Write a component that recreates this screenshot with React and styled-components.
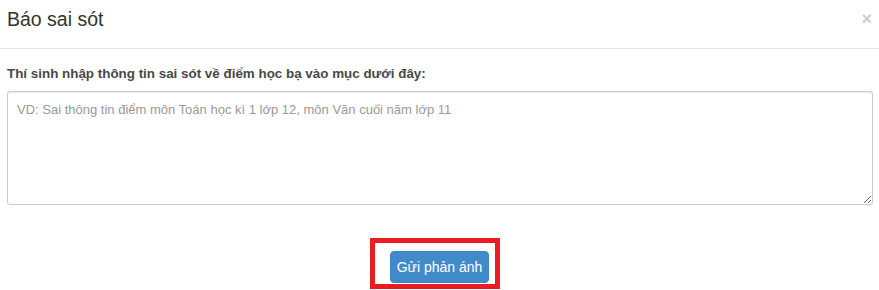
import React from 'react'
import styled, { createGlobalStyle } from 'styled-components'

const Global = createGlobalStyle`
  html, body {
    margin: 0;
    padding: 0;
    background: #fff;
  }
  body {
    font-family: "Liberation Sans", Arial, Helvetica, sans-serif;
    color: #333;
  }
  * { box-sizing: border-box; }
`

const Modal = styled.div`
  width: 879px;
  height: 290px;
  display: flex;
  flex-direction: column;
  background: #fff;
`

const Header = styled.div`
  height: 49px;
  padding: 8px 7px 0 7px;
  display: flex;
  justify-content: space-between;
  align-items: flex-start;
  border-bottom: 1px solid #e5e5e5;
`

const Title = styled.h4`
  margin: 0;
  font-size: 19.5px;
  line-height: 22px;
  font-weight: 400;
  color: #333;
`

const Close = styled.button`
  border: none;
  background: transparent;
  padding: 0;
  margin-top: 1px;
  font-family: "Liberation Sans", Arial, sans-serif;
  font-size: 18px;
  line-height: 20px;
  font-weight: 700;
  color: #000;
  opacity: 0.2;
  cursor: pointer;
`

const Body = styled.div`
  padding: 16px 6px 0 7px;
  display: flex;
  flex-direction: column;
`

const Label = styled.label`
  font-size: 13.4px;
  line-height: 18px;
  font-weight: 700;
  color: #484848;
  margin-bottom: 8px;
`

const TextArea = styled.textarea`
  width: 100%;
  height: 114px;
  padding: 9px 9px 3px;
  font-family: "Liberation Sans", Arial, sans-serif;
  font-size: 13px;
  line-height: 18px;
  color: #555;
  border: 1px solid #ccc;
  border-radius: 3px;
  box-shadow: inset 0 1px 1px rgba(0, 0, 0, 0.075);
  outline: none;
  &::placeholder {
    color: #999;
  }
`

const Footer = styled.div`
  display: flex;
  justify-content: center;
  padding-top: 46px;
`

const Highlight = styled.div`
  position: relative;
  &::before {
    content: '';
    position: absolute;
    left: -20px;
    right: -11px;
    top: -13px;
    bottom: -6px;
    border: 5px solid #ec1c24;
    pointer-events: none;
  }
`

const Button = styled.button`
  height: 32px;
  padding: 0 6px;
  font-family: "Liberation Sans", Arial, sans-serif;
  font-size: 14px;
  line-height: 20px;
  color: #fff;
  background: #428bca;
  border: 1px solid #3d84c2;
  border-radius: 4px;
  cursor: pointer;
`

export default function App() {
  return (
    <Modal>
      <Global />
      <Header>
        <Title>Báo sai sót</Title>
        <Close aria-label="Close">×</Close>
      </Header>
      <Body>
        <Label>Thí sinh nhập thông tin sai sót về điểm học bạ vào mục dưới đây:</Label>
        <TextArea placeholder="VD: Sai thông tin điểm môn Toán học kì 1 lớp 12, môn Văn cuối năm lớp 11" />
      </Body>
      <Footer>
        <Highlight>
          <Button>Gửi phản ánh</Button>
        </Highlight>
      </Footer>
    </Modal>
  )
}
